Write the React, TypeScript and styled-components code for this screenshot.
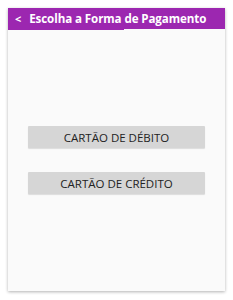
import React from "react";
import styled, { createGlobalStyle } from "styled-components";

const Global = createGlobalStyle`
  html, body { margin: 0; padding: 0; background: #ffffff; }
  body { padding: 8px; font-family: "Open Sans", "Noto Sans", sans-serif; }
  * { box-sizing: border-box; }
`;

const Card = styled.div`
  width: 217px;
  height: 283px;
  background: #fafafa;
  box-shadow: 0 1px 3px rgba(0,0,0,0.3);
  display: flex;
  flex-direction: column;
`;

const Header = styled.div`
  height: 21px;
  background: #9c27b0;
  color: #fff;
  display: flex;
  align-items: center;
  gap: 8px;
  padding-left: 7px;
  font-weight: 700;
  font-size: 11.6px;
  letter-spacing: -0.1px;
  position: relative;
`;

const Progress = styled.div`
  position: absolute;
  left: 0;
  bottom: -1px;
  width: 116px;
  height: 1px;
  background: #9c27b0;
`;

const Back = styled.span`
  font-size: 11px;
`;

const Body = styled.div`
  flex: 1;
  display: flex;
  flex-direction: column;
  align-items: center;
  padding-top: 97px;
  gap: 24px;
`;

const Button = styled.button`
  width: 177px;
  height: 22px;
  border: none;
  border-radius: 1px;
  background: #d6d6d6;
  box-shadow: 0 1px 1px rgba(0,0,0,0.12);
  color: #222;
  font-family: "Open Sans", "Noto Sans", sans-serif;
  font-size: 11.5px;
  padding: 0;
`;

export default function App() {
  return (
    <>
      <Global />
      <Card>
        <Header>
          <Back>&lt;</Back>
          <span>Escolha a Forma de Pagamento</span>
          <Progress />
        </Header>
        <Body>
          <Button>CARTÃO DE DÉBITO</Button>
          <Button>CARTÃO DE CRÉDITO</Button>
        </Body>
      </Card>
    </>
  );
}
